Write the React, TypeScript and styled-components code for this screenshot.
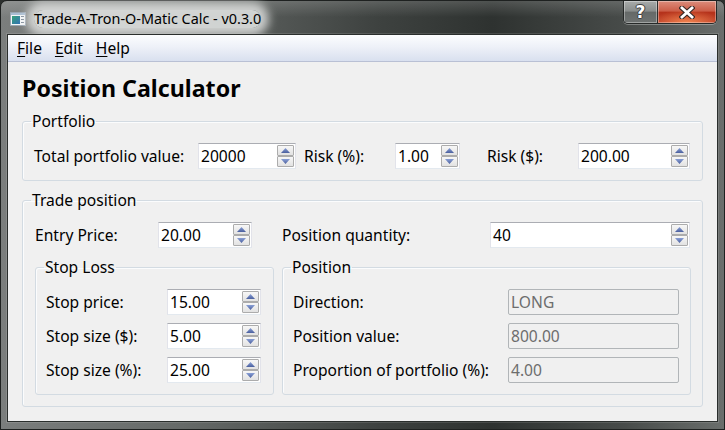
import styled, { createGlobalStyle } from "styled-components";

const GlobalStyle = createGlobalStyle`
  html, body {
    margin: 0;
    padding: 0;
    width: 725px;
    height: 430px;
    overflow: hidden;
    background: #2c302e;
  }
  body {
    font-family: "Noto Sans", "Open Sans", sans-serif;
    font-size: 15.6px;
    color: #000;
  }
  * { box-sizing: border-box; }
`

const Window = styled.div`
  width: 725px;
  height: 430px;
  display: flex;
  flex-direction: column;
  padding: 0 6px 7px;
  border: 1px solid #1e2120;
  border-radius: 7px 7px 0 0;
  background:
    linear-gradient(180deg, rgba(255,255,255,.16) 0px, rgba(255,255,255,0) 16px),
    linear-gradient(90deg, #7b7e7d 0%, #666a68 25%, #3e4240 52%, #2e3230 68%, #474b49 86%, #6a6e6c 100%);
`

const TitleBar = styled.div`
  height: 33px;
  flex: none;
  display: flex;
  align-items: flex-start;
`

const AppIcon = styled.svg`
  flex: none;
  margin: 10px 0 0 3px;
`

const Title = styled.div`
  margin: 9px 0 0 8px;
  font-size: 14.4px;
  line-height: 18px;
  color: #000;
  background: rgba(224,226,225,.88);
  border-radius: 10px;
  box-shadow: 0 0 10px 8px rgba(224,226,225,.85);
`

const CaptionButtons = styled.div`
  margin-left: auto;
  margin-right: 1px;
  display: flex;
  height: 23px;
  border: 1px solid #262928;
  border-top: none;
  border-radius: 0 0 5px 5px;
  overflow: hidden;
  box-shadow: 0 1px 0 rgba(255,255,255,.3);
`

const CaptionButton = styled.div<{ $close?: boolean }>`
  width: ${p => p.$close ? 59 : 33}px;
  display: flex;
  align-items: center;
  justify-content: center;
  box-shadow: inset 0 0 0 1px rgba(255,255,255,.35);
  border-left: ${p => p.$close ? '1px solid #2a2d2c' : 'none'};
  background: ${p => p.$close
    ? 'radial-gradient(ellipse 60% 60% at 50% 100%, rgba(255,150,90,.8), rgba(255,150,90,0)), linear-gradient(180deg, #dc8d7c 0%, #cc5e48 45%, #b5321b 52%, #c0422a 100%)'
    : 'linear-gradient(180deg, #a9acab 0%, #898d8c 45%, #656968 52%, #6f7372 100%)'};
`

const HelpGlyph = styled.span`
  font: 700 17px/1 "DejaVu Sans", sans-serif;
  color: #fff;
  text-shadow: 0 0 1px #333, 1px 0 0 #444, -1px 0 0 #444, 0 1px 0 #444, 0 -1px 0 #444;
`

const Client = styled.div`
  flex: 1;
  display: flex;
  flex-direction: column;
  border: 1px solid #2a2e2c;
  box-shadow: 0 0 0 1px rgba(255,255,255,.12);
  background: #f0f0f0;
`

const MenuBar = styled.div`
  flex: none;
  display: flex;
  height: 27px;
  padding-left: 2px;
  background: linear-gradient(180deg, #fcfdfe 0%, #eef1f8 45%, #d9e0ef 100%);
  border-bottom: 1px solid #b9c0d4;
`

const MenuItem = styled.div`
  padding: 0 6px 0 7px;
  line-height: 26px;
  color: #000;

  u { text-decoration-thickness: 1px; text-underline-offset: 2px; }
`

const Content = styled.div`
  flex: 1;
  padding: 12px 14px 0;
  display: flex;
  flex-direction: column;
`

const Heading = styled.h1`
  margin: 0 0 10px;
  font: 700 23.2px/28px "Noto Sans", sans-serif;
`

const Group = styled.fieldset<{ $mt?: number }>`
  margin: ${p => p.$mt ?? 0}px 0 0;
  padding: 0;
  min-width: 0;
  border: 1px solid #d3dbe2;
  border-radius: 3px;
  box-shadow: inset 1px 1px 0 #fbfcfd;
`

const GroupTitle = styled.legend`
  margin-left: 8px;
  padding: 0 1px;
  line-height: 18px;
`

const GroupBody = styled.div<{ $pad: string }>`
  padding: ${p => p.$pad};
  display: flex;
  flex-direction: column;
  gap: 8px;
`

const InlineRow = styled.div`
  display: flex;
  align-items: center;
`

const Label = styled.span<{ $w: number; $ml?: number }>`
  width: ${p => p.$w}px;
  margin-left: ${p => p.$ml ?? 0}px;
  flex: none;
  white-space: nowrap;
  line-height: 18px;
`

const FieldRow = styled.div<{ $label: number }>`
  display: grid;
  grid-template-columns: ${p => p.$label}px auto;
  align-items: center;
  justify-content: start;
`

const TwoCols = styled.div`
  display: grid;
  grid-template-columns: 239px 409px;
  column-gap: 8px;
`

const SpinFrame = styled.div<{ $w: number }>`
  width: ${p => p.$w}px;
  height: 26px;
  flex: none;
  display: flex;
  align-items: center;
  background: #fff;
  border: 1px solid;
  border-color: #abadb3 #e2e3ea #e3e9ef #e2e3ea;
  padding: 0 1px 0 2px;
`

const SpinValue = styled.span`
  flex: 1;
  line-height: 18px;
`

const SpinButtons = styled.div`
  display: flex;
  flex-direction: column;
`

const SpinButton = styled.div`
  width: 17px;
  height: 11px;
  border: 1px solid #acacac;
  border-radius: 1px;
  background: linear-gradient(180deg, #f7f7f7, #e2e2e2);
  display: flex;
  align-items: center;
  justify-content: center;
`

const ReadOnly = styled.div`
  width: 171px;
  height: 26px;
  display: flex;
  align-items: center;
  padding: 0 2px;
  border: 1px solid #b1b5b8;
  border-radius: 2px;
  background: #f0f0f0;
  color: #6d6d6d;
  line-height: 18px;
`

const Arrow = ({ up }: { up?: boolean }) => (
  <svg width="9" height="5" viewBox="0 0 9 5">
    <defs>
      <linearGradient id={up ? 'au' : 'ad'} x1="0" y1="0" x2="0" y2="1">
        <stop offset="0" stopColor="#8aa0d6" />
        <stop offset="1" stopColor="#4a5f9e" />
      </linearGradient>
    </defs>
    <polygon points={up ? '4.5,0 9,5 0,5' : '0,0 9,0 4.5,5'} fill={`url(#${up ? 'au' : 'ad'})`} />
  </svg>
)

const Spin = ({ value, w }: { value: string; w: number }) => (
  <SpinFrame $w={w}>
    <SpinValue>{value}</SpinValue>
    <SpinButtons>
      <SpinButton><Arrow up /></SpinButton>
      <SpinButton><Arrow /></SpinButton>
    </SpinButtons>
  </SpinFrame>
)

const App = () => {
  return <>
    <GlobalStyle />
    <Window>
      <TitleBar>
        <AppIcon width="16" height="16" viewBox="0 0 16 16">
          <defs>
            <linearGradient id="ic" x1="0" y1="0" x2="1" y2="1">
              <stop offset="0" stopColor="#3aa37a" />
              <stop offset="1" stopColor="#2c6fb4" />
            </linearGradient>
          </defs>
          <rect x="0.5" y="1.5" width="15" height="13" fill="#f4f6f8" stroke="#9aa6b2" />
          <rect x="1" y="2" width="14" height="2" fill="#a9bdd3" />
          <rect x="2" y="5" width="8" height="8" fill="url(#ic)" />
          <rect x="11" y="5" width="3" height="1" fill="#7d8a98" />
          <rect x="11" y="8" width="3" height="1" fill="#7d8a98" />
          <rect x="11" y="11" width="3" height="1" fill="#7d8a98" />
        </AppIcon>
        <Title>Trade-A-Tron-O-Matic Calc - v0.3.0</Title>
        <CaptionButtons>
          <CaptionButton><HelpGlyph>?</HelpGlyph></CaptionButton>
          <CaptionButton $close>
            <svg width="16" height="13" viewBox="0 0 16 13">
              <path d="M3 2 L13 11 M13 2 L3 11" stroke="#3a2a26" strokeWidth="5" strokeLinecap="square" />
              <path d="M3 2 L13 11 M13 2 L3 11" stroke="#fff" strokeWidth="2.8" strokeLinecap="square" />
            </svg>
          </CaptionButton>
        </CaptionButtons>
      </TitleBar>
      <Client>
        <MenuBar>
          <MenuItem><u>F</u>ile</MenuItem>
          <MenuItem><u>E</u>dit</MenuItem>
          <MenuItem><u>H</u>elp</MenuItem>
        </MenuBar>
        <Content>
          <Heading>Position Calculator</Heading>

          <Group>
            <GroupTitle>Portfolio</GroupTitle>
            <GroupBody $pad="13px 11px 11px 11px">
              <InlineRow>
                <Label $w={164}>Total portfolio value:</Label>
                <Spin value="20000" w={98} />
                <Label $w={91} $ml={8}>Risk (%):</Label>
                <Spin value="1.00" w={65} />
                <Label $w={91} $ml={27}>Risk ($):</Label>
                <Spin value="200.00" w={112} />
              </InlineRow>
            </GroupBody>
          </Group>

          <Group $mt={10}>
            <GroupTitle>Trade position</GroupTitle>
            <GroupBody $pad="13px 11px 11px 12px">
              <TwoCols>
                <FieldRow $label={123}>
                  <Label $w={123}>Entry Price:</Label>
                  <Spin value="20.00" w={94} />
                </FieldRow>
                <FieldRow $label={208}>
                  <Label $w={208}>Position quantity:</Label>
                  <Spin value="40" w={200} />
                </FieldRow>
              </TwoCols>
              <TwoCols>
                <Group $mt={2}>
                  <GroupTitle>Stop Loss</GroupTitle>
                  <GroupBody $pad="13px 11px 11px 10px">
                    <FieldRow $label={121}>
                      <Label $w={121}>Stop price:</Label>
                      <Spin value="15.00" w={94} />
                    </FieldRow>
                    <FieldRow $label={121}>
                      <Label $w={121}>Stop size ($):</Label>
                      <Spin value="5.00" w={94} />
                    </FieldRow>
                    <FieldRow $label={121}>
                      <Label $w={121}>Stop size (%):</Label>
                      <Spin value="25.00" w={94} />
                    </FieldRow>
                  </GroupBody>
                </Group>
                <Group $mt={2}>
                  <GroupTitle>Position</GroupTitle>
                  <GroupBody $pad="13px 10px 11px 10px">
                    <FieldRow $label={215}>
                      <Label $w={215}>Direction:</Label>
                      <ReadOnly>LONG</ReadOnly>
                    </FieldRow>
                    <FieldRow $label={215}>
                      <Label $w={215}>Position value:</Label>
                      <ReadOnly>800.00</ReadOnly>
                    </FieldRow>
                    <FieldRow $label={215}>
                      <Label $w={215}>Proportion of portfolio (%):</Label>
                      <ReadOnly>4.00</ReadOnly>
                    </FieldRow>
                  </GroupBody>
                </Group>
              </TwoCols>
            </GroupBody>
          </Group>
        </Content>
      </Client>
    </Window>
  </>
}

export default App
